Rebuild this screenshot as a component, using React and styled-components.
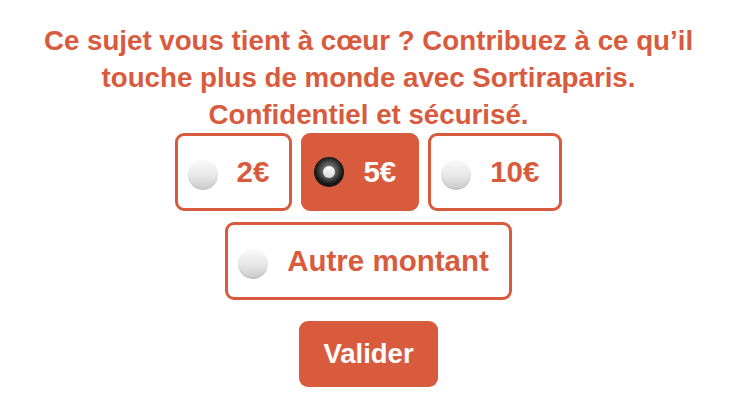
import { useState } from "react";
import styled, { createGlobalStyle, css } from "styled-components";

const ORANGE = "#d95b3e";

const GlobalStyle = createGlobalStyle`
	html, body {
		margin: 0;
		padding: 0;
		background: #ffffff;
	}

	body {
		font-family: "Liberation Sans", Arial, Helvetica, sans-serif;
	}
`;

const Wrapper = styled.div`
	display: flex;
	flex-direction: column;
	align-items: center;
	width: 737px;
	height: 400px;
	padding-top: 22px;
	box-sizing: border-box;
`;

const Title = styled.p`
	margin: 0;
	font-size: 27.7px;
	line-height: 37px;
	font-weight: 700;
	color: ${ORANGE};
	text-align: center;
	white-space: nowrap;
`;

const Row = styled.div`
	display: flex;
	justify-content: center;
	gap: 9px;
	margin-top: ${({ $top }) => $top}px;
`;

const Option = styled.label`
	display: flex;
	align-items: center;
	gap: 19px;
	height: 78px;
	padding: 0 20px 0 10px;
	box-sizing: border-box;
	border: 3px solid ${ORANGE};
	border-radius: 9px;
	background: ${({ $checked }) => ($checked ? ORANGE : "#ffffff")};
	color: ${({ $checked }) => ($checked ? "#ffffff" : ORANGE)};
	font-size: 29.5px;
	font-weight: 700;
	cursor: pointer;
`;

const Radio = styled.span`
	position: relative;
	flex: none;
	width: 30px;
	height: 30px;
	margin-top: 6px;
	border-radius: 50%;

	${({ $checked }) =>
		$checked
			? css`
					margin-top: 0;
					background: radial-gradient(circle at 50% 45%, #9a9a9a 0%, #555 35%, #1a1a1a 60%, #000 100%);

					&::after {
						content: "";
						position: absolute;
						top: 9px;
						left: 9px;
						width: 12px;
						height: 12px;
						border-radius: 50%;
						background: linear-gradient(180deg, #ffffff 0%, #d8d8d8 100%);
					}
			  `
			: css`
					background: linear-gradient(180deg, #fafafa 0%, #e6e6e6 55%, #c9c9c9 100%);
					box-shadow: inset 0 -1px 2px rgba(0, 0, 0, 0.08);
			  `}
`;

const Submit = styled.button`
	margin-top: 21px;
	height: 66px;
	padding: 0 24px;
	border: none;
	border-radius: 9px;
	background: ${ORANGE};
	color: #ffffff;
	font-family: inherit;
	font-size: 27.5px;
	font-weight: 700;
	cursor: pointer;
`;

const amounts = ["2€", "5€", "10€"];

export default function App() {
	const [selected, setSelected] = useState("5€");

	const renderOption = (value) => {
		const checked = selected === value;

		return (
			<Option key={value} $checked={checked} onClick={() => setSelected(value)}>
				<Radio $checked={checked} />
				{value}
			</Option>
		);
	};

	return (
		<>
			<GlobalStyle />
			<Wrapper>
				<Title>
					Ce sujet vous tient à cœur ? Contribuez à ce qu’il
					<br />
					touche plus de monde avec Sortiraparis.
					<br />
					Confidentiel et sécurisé.
				</Title>

				<Row $top={0}>{amounts.map(renderOption)}</Row>
				<Row $top={11}>{renderOption("Autre montant")}</Row>

				<Submit type="button">Valider</Submit>
			</Wrapper>
		</>
	);
}
